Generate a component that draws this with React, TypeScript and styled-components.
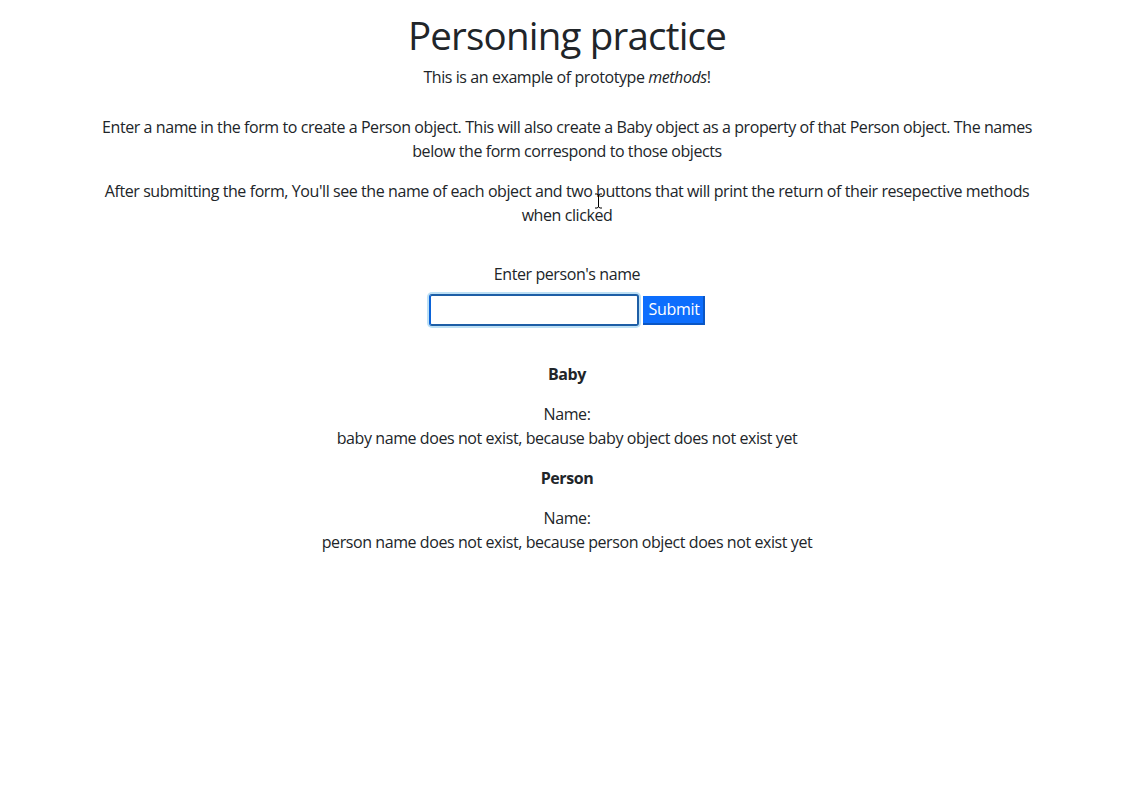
import React from "react";
import styled, { createGlobalStyle } from "styled-components";

const Global = createGlobalStyle`
  html, body { margin: 0; padding: 0; background: #fff; }
  body {
    font-family: "Open Sans", "Noto Sans", "Liberation Sans", sans-serif;
    font-size: 16px;
    line-height: 1.5;
    letter-spacing: -0.42px;
    color: #212529;
  }
  * { box-sizing: border-box; }
`;

const Container = styled.main`
  position: relative;
  max-width: 960px;
  margin: 0 auto;
  padding: 11px 12px 0;
  text-align: center;
`;

const Title = styled.h1`
  margin: 0 0 6px;
  font-size: 38.5px;
  font-weight: 400;
  line-height: 48px;
  letter-spacing: -0.8px;
`;

const Para = styled.p<{ $gap?: number }>`
  margin: 0 0 ${(p) => (p.$gap ?? 16)}px;
`;

const Form = styled.form`
  display: flex;
  flex-direction: column;
  align-items: center;
  margin-top: 35px;
`;

const Label = styled.label`
  display: block;
  margin-bottom: 8px;
`;

const InputRow = styled.div`
  display: flex;
  align-items: center;
  gap: 4px;
`;

const TextInput = styled.input`
  width: 210px;
  height: 32px;
  border: 2px solid #1d5ea6;
  border-left-color: #0b63d8;
  border-radius: 3px;
  box-shadow: 0 0 0 2px #bde0f5;
  outline: none;
  font: inherit;
  padding: 0 4px;
`;

const SubmitButton = styled.button`
  height: 29px;
  padding: 0 3px 0 5px;
  background: #0d6efd;
  color: #fff;
  border: none;
  border-right: 2px solid #0a56c4;
  border-bottom: 2px solid #0a56c4;
  font: inherit;
  letter-spacing: -0.3px;
  line-height: 1;
  cursor: pointer;
`;

const Section = styled.section`
  margin-top: 36px;
`;

const Heading = styled.h3`
  margin: 0 0 16px;
  font-size: 16px;
  font-weight: 700;
  line-height: 1.5;
`;

const Block = styled.div`
  margin-bottom: 16px;
`;

const Cursor = styled.svg`
  position: absolute;
  left: 507px;
  top: 193px;
  pointer-events: none;
`;

const entities = [
  { title: "Baby", text: "baby name does not exist, because baby object does not exist yet" },
  { title: "Person", text: "person name does not exist, because person object does not exist yet" },
];

export default function App() {
  return (
    <>
      <Global />
      <Container>
        <Title>Personing practice</Title>
        <Para $gap={26}>
          This is an example of prototype <em>methods</em>!
        </Para>
        <Para>
          Enter a name in the form to create a Person object. This will also create a Baby object as a
          property of that Person object. The names below the form correspond to those objects
        </Para>
        <Para>
          After submitting the form, You'll see the name of each object and two buttons that will print
          the return of their resepective methods when clicked
        </Para>
        <Form onSubmit={(e) => e.preventDefault()}>
          <Label htmlFor="name">Enter person's name</Label>
          <InputRow>
            <TextInput id="name" type="text" />
            <SubmitButton type="submit">Submit</SubmitButton>
          </InputRow>
        </Form>
        <Section>
          {entities.map((e) => (
            <Block key={e.title}>
              <Heading>{e.title}</Heading>
              <div>Name:</div>
              <div>{e.text}</div>
            </Block>
          ))}
        </Section>
        <Cursor width="9" height="16" viewBox="0 0 9 16">
          <path d="M1 1h2l1.5 1L6 1h2M4.5 2v12M1 15h2l1.5-1L6 15h2" fill="none" stroke="#000" strokeWidth="1" />
        </Cursor>
      </Container>
    </>
  );
}
